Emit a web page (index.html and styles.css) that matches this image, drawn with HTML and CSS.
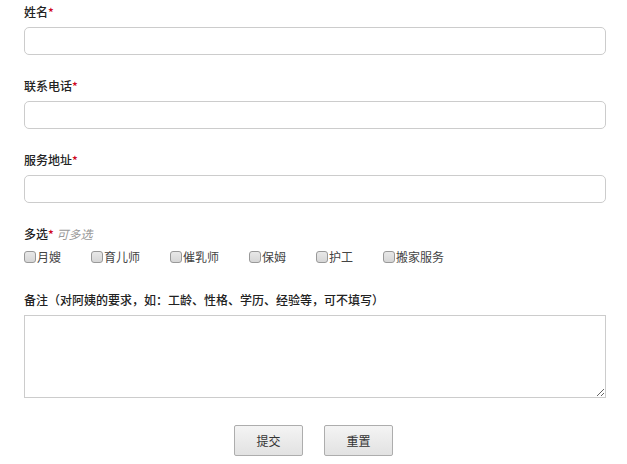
FILE: index.html
```html
<!DOCTYPE html>
<html lang="zh-CN">
<head>
  <meta charset="UTF-8" />
  <title>预约阿姨</title>
  <link rel="stylesheet" href="styles.css">
</head>
<body>
  <form class="order-form" onsubmit="return false">
    <div class="field">
      <label class="field-label">姓名<span class="req">*</span></label>
      <input type="text" class="text-input">
    </div>
    <div class="field">
      <label class="field-label">联系电话<span class="req">*</span></label>
      <input type="tel" class="text-input">
    </div>
    <div class="field">
      <label class="field-label">服务地址<span class="req">*</span></label>
      <input type="text" class="text-input">
    </div>
    <div class="field field-checks">
      <label class="field-label">多选<span class="req">*</span> <em class="hint">可多选</em></label>
      <div class="checks">
        <label class="check"><input type="checkbox">月嫂</label>
        <label class="check"><input type="checkbox">育儿师</label>
        <label class="check"><input type="checkbox">催乳师</label>
        <label class="check"><input type="checkbox">保姆</label>
        <label class="check"><input type="checkbox">护工</label>
        <label class="check"><input type="checkbox">搬家服务</label>
      </div>
    </div>
    <div class="field">
      <label class="field-label">备注（对阿姨的要求，如：工龄、性格、学历、经验等，可不填写）</label>
      <textarea class="memo"></textarea>
    </div>
    <div class="actions">
      <button type="submit">提交</button>
      <button type="reset">重置</button>
    </div>
  </form>
</body>
</html>
```

FILE: styles.css
```css
body {
  margin: 0;
  padding: 4px 21px 0 24px;
  font-family: "Noto Sans CJK SC", "Noto Sans", sans-serif;
  font-size: 12px;
  color: #333;
  background: #fff;
}
.field {
  margin-bottom: 23px;
}
.field-checks {
  margin-bottom: 27px;
}
.field-label {
  display: block;
  line-height: 16px;
  font-weight: 500;
  color: #222;
  margin-bottom: 7px;
}
.field-label .req {
  color: #d0021b;
}
.field-label .hint {
  font-weight: normal;
  color: #999;
}
.text-input {
  display: block;
  box-sizing: border-box;
  width: 100%;
  height: 28px;
  margin: 0;
  padding: 0 8px;
  border: 1px solid #ccc;
  border-radius: 5px;
  font-size: 12px;
  font-family: inherit;
  outline: none;
}
.checks {
  display: flex;
  line-height: 16px;
}
.check {
  display: flex;
  align-items: center;
  margin-right: 30px;
  color: #444;
}
.check input {
  appearance: none;
  -webkit-appearance: none;
  width: 12px;
  height: 12px;
  margin: 0 1px 0 0;
  border: 1px solid #999;
  border-radius: 3px;
  background: linear-gradient(#e8e8e8, #d6d6d6);
}
.memo {
  display: block;
  box-sizing: border-box;
  width: 100%;
  height: 83px;
  margin: 0;
  border: 1px solid #ccc;
  border-radius: 0;
  font-family: inherit;
  outline: none;
}
.actions {
  display: flex;
  justify-content: center;
  gap: 21px;
  margin-top: 27px;
  padding-right: 3px;
}
.actions button {
  width: 69px;
  height: 31px;
  border: 1px solid #adadad;
  border-radius: 2px;
  background: linear-gradient(#f4f4f4, #e2e2e2);
  font-family: inherit;
  font-size: 12px;
  color: #333;
}
```
